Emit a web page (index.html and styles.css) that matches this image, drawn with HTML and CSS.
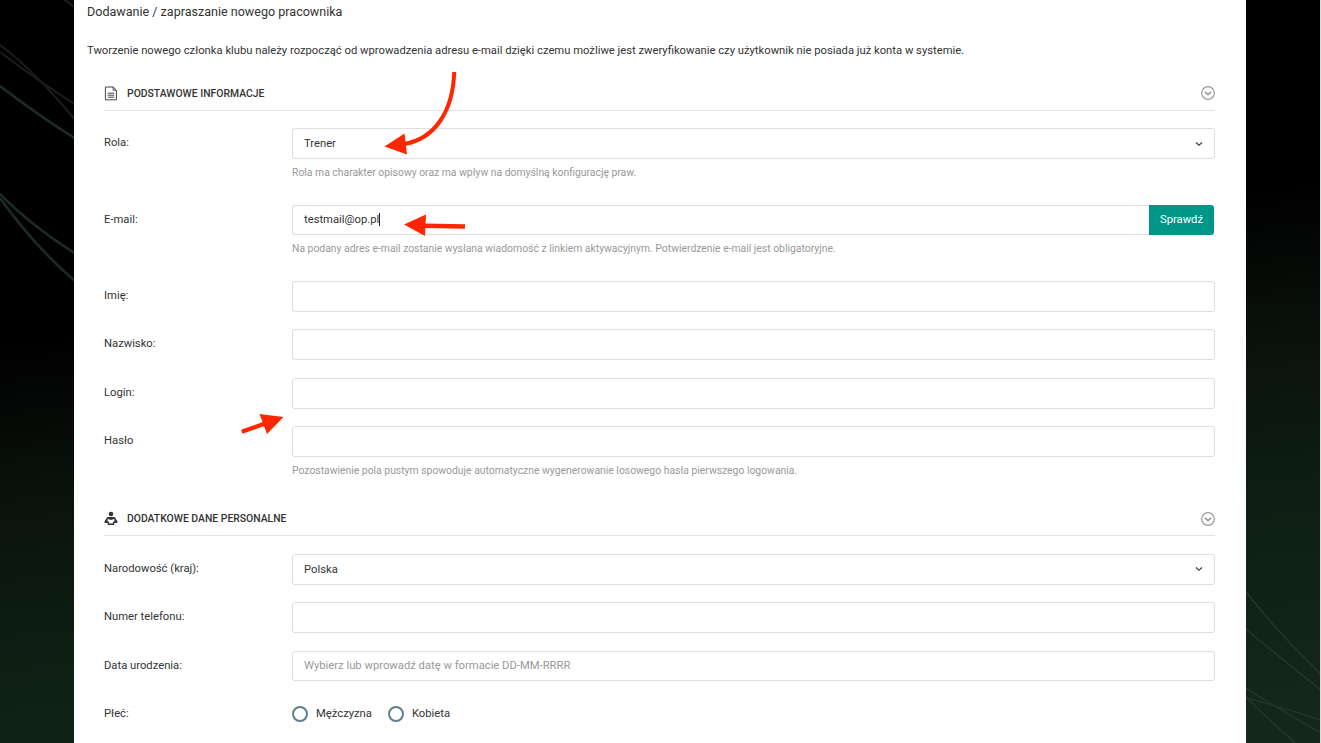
FILE: index.html
```html
<!DOCTYPE html>
<html lang="pl">
<head>
    <meta charset="UTF-8">
    <meta name="viewport" content="width=device-width, initial-scale=1.0">
    <title>Dodawanie nowego pracownika</title>
    <link rel="stylesheet" href="styles.css">
</head>
<body>
    <svg class="backdrop" viewBox="0 0 1320 743" fill="none">
        <g stroke="#1b1d1d" stroke-width="2">
            <path d="M62 -2L76 8"/>
            <path d="M0 45Q34 70 76 121"/>
            <path d="M0 52Q34 78 76 105"/>
        </g>
        <g stroke="#1c2c24" stroke-width="2.6">
            <path d="M0 86Q38 115 76 139"/>
            <path d="M0 194Q30 225 76 254"/>
            <path d="M0 198Q35 247 76 282"/>
        </g>
        <g stroke="#20382a" stroke-width="1.5">
            <path d="M1246 592Q1280 635 1321 674"/>
            <path d="M1246 629Q1285 662 1321 690"/>
            <path d="M1246 688Q1280 710 1321 733"/>
            <path d="M1246 698Q1285 708 1321 720"/>
            <path d="M1246 697Q1272 723 1296 743"/>
        </g>
    </svg>

    <main class="panel">
        <h1 class="title">Dodawanie / zapraszanie nowego pracownika</h1>
        <p class="intro">Tworzenie nowego członka klubu należy rozpocząć od wprowadzenia adresu e-mail dzięki czemu możliwe jest zweryfikowanie czy użytkownik nie posiada już konta w systemie.</p>

        <form class="form">
            <section class="section">
                <div class="section-header">
                    <svg class="section-icon" viewBox="0 0 14 15" fill="none" stroke="#444" stroke-width="1">
                        <path d="M1.4 1h7.8l3.2 3.2v9.6h-11zM9.2 1v3.2h3.2"/>
                        <path d="M3.7 7.2h6.6M3.7 9.2h6.6M3.7 11.2h6.6"/>
                    </svg>
                    <h2>Podstawowe informacje</h2>
                    <svg class="collapse" viewBox="0 0 14 14" fill="none" stroke="#999">
                        <circle cx="7" cy="7" r="6.3" stroke-width="1.2"/>
                        <path d="M3.9 5.8l3.1 2.8 3.1-2.8" stroke-width="1.7"/>
                    </svg>
                </div>
                <div class="row">
                    <label>Rola:</label>
                    <div class="field">
                        <div class="control select">Trener
                            <svg class="caret" viewBox="0 0 8 6" fill="none" stroke="#444" stroke-width="1.3"><path d="M1 1.4l3 2.8 3-2.8"/></svg>
                        </div>
                        <div class="help">Rola ma charakter opisowy oraz ma wpływ na domyślną konfigurację praw.</div>
                    </div>
                </div>
                <div class="row">
                    <label>E-mail:</label>
                    <div class="field">
                        <div class="input-group">
                            <div class="control email">testmail@op.pl<span class="cursor"></span></div>
                            <button class="button" type="button">Sprawdź</button>
                        </div>
                        <div class="help">Na podany adres e-mail zostanie wysłana wiadomość z linkiem aktywacyjnym. Potwierdzenie e-mail jest obligatoryjne.</div>
                    </div>
                </div>
                <div class="row">
                    <label for="name">Imię:</label>
                    <input class="control" id="name" type="text">
                </div>
                <div class="row">
                    <label for="surname">Nazwisko:</label>
                    <input class="control" id="surname" type="text">
                </div>
                <div class="row">
                    <label for="login">Login:</label>
                    <input class="control" id="login" type="text">
                </div>
                <div class="row">
                    <label for="password">Hasło</label>
                    <div class="field">
                        <input class="control" id="password" type="password">
                        <div class="help">Pozostawienie pola pustym spowoduje automatyczne wygenerowanie losowego hasła pierwszego logowania.</div>
                    </div>
                </div>
            </section>

            <section class="section">
                <div class="section-header">
                    <svg class="section-icon" viewBox="0 0 14 15" fill="#333">
                        <circle cx="7" cy="3" r="2.3"/>
                        <path d="M3.6 6h6.8c1.3 1.2 2.2 3 3.3 5.1l-.8 1h-2.6V14H3.7v-1.9H1.1l-.8-1C1.4 9 2.3 7.2 3.6 6z"/>
                        <path fill="#fff" d="M3.6 8l2 .5L7 9l1.4-.5 2-.5v2.4l-1.5.4v1.6H5.1v-1.6l-1.5-.4z"/>
                    </svg>
                    <h2>Dodatkowe dane personalne</h2>
                    <svg class="collapse" viewBox="0 0 14 14" fill="none" stroke="#999">
                        <circle cx="7" cy="7" r="6.3" stroke-width="1.2"/>
                        <path d="M3.9 5.8l3.1 2.8 3.1-2.8" stroke-width="1.7"/>
                    </svg>
                </div>
                <div class="row">
                    <label>Narodowość (kraj):</label>
                    <div class="control select">Polska
                        <svg class="caret" viewBox="0 0 8 6" fill="none" stroke="#444" stroke-width="1.3"><path d="M1 1.4l3 2.8 3-2.8"/></svg>
                    </div>
                </div>
                <div class="row">
                    <label for="phone">Numer telefonu:</label>
                    <input class="control" id="phone" type="text">
                </div>
                <div class="row">
                    <label for="birth">Data urodzenia:</label>
                    <input class="control" id="birth" type="text" placeholder="Wybierz lub wprowadź datę w formacie DD-MM-RRRR">
                </div>
                <div class="row">
                    <label>Płeć:</label>
                    <div class="radios">
                        <label class="radio"><input type="radio" name="gender">Mężczyzna</label>
                        <label class="radio"><input type="radio" name="gender">Kobieta</label>
                    </div>
                </div>
            </section>
        </form>
    </main>

    <!-- Red pointers over the form -->
    <svg class="arrows" viewBox="0 0 1320 743" fill="#ff2600">
        <path d="M454.2 72C453 111 435 139 404 144" fill="none" stroke="#ff2600" stroke-width="4"/>
        <path d="M384.5 146.5L404.5 133.5L407 154.5z"/>
        <path d="M465 226.5L424 225.8" stroke="#ff2600" stroke-width="4.6"/>
        <path d="M404 224.5L426 214.5L425 236z"/>
        <path d="M241.8 431.8L265 423.5" stroke="#ff2600" stroke-width="4.2"/>
        <path d="M283.5 417L259.5 414L267 434z"/>
    </svg>
</body>
</html>
```

FILE: styles.css
```css
* {
    box-sizing: border-box;
}
body {
    margin: 0;
    height: 743px;
    overflow: hidden;
    font-family: Roboto, sans-serif;
    font-size: 11.24px;
    color: #333;
    background: linear-gradient(173deg, #000 0%, #000 38%, #0a110b 54%, #0d1d13 70%, #112317 84%, #14291b 100%);
    border-right: 1px solid #ddd;
}
.backdrop,
.arrows {
    position: absolute;
    top: 0;
    left: 0;
    width: 1320px;
    height: 743px;
    pointer-events: none;
}
.panel {
    position: relative;
    width: 1172px;
    height: 743px;
    margin-left: 74px;
    padding: 3px 31px 0 13px;
    background: #fff;
}
.title {
    margin: 0;
    font-size: 12.56px;
    font-weight: 400;
    line-height: 18px;
}
.intro {
    margin: 21px 0 0;
    line-height: 18px;
    white-space: nowrap;
}
.form {
    padding: 17px 0 0 17px;
}
.section-header {
    display: flex;
    align-items: center;
    height: 33.6px;
    margin-bottom: 17.6px;
    border-bottom: 1px solid #e2e2e2;
}
.section-icon {
    width: 14px;
    height: 15px;
    margin-right: 9px;
}
.section-header h2 {
    margin: 0;
    font-size: 10.4px;
    font-weight: 500;
    text-transform: uppercase;
}
.collapse {
    width: 14px;
    height: 14px;
    margin-left: auto;
}
.row {
    display: grid;
    grid-template-columns: 188px 1fr;
    margin-bottom: 17.6px;
    line-height: 30.8px;
}
.control {
    display: block;
    width: 100%;
    height: 30.8px;
    padding: 0 11px;
    border: 1px solid #ddd;
    border-radius: 3px;
    background: #fff;
    color: #333;
    font: inherit;
    line-height: 29px;
    outline: none;
}
.control::placeholder {
    color: #999;
    opacity: 1;
}
.select {
    display: flex;
    align-items: center;
    justify-content: space-between;
}
.caret {
    width: 8px;
    height: 6px;
}
.input-group,
.email {
    display: flex;
    align-items: center;
}
.email {
    flex: 1;
    border-right: 0;
    border-radius: 3px 0 0 3px;
}
.cursor {
    width: 1px;
    height: 13px;
    background: #222;
}
.button {
    width: 65px;
    height: 30.8px;
    margin-right: 1px;
    padding: 0;
    border: 0;
    border-radius: 0 3px 3px 0;
    background: #009688;
    color: #fff;
    font: inherit;
}
.help {
    height: 28px;
    padding-top: 5px;
    color: #999;
    font-size: 10.39px;
    line-height: 18px;
}
.radios {
    display: flex;
    gap: 16px;
}
.radio {
    display: flex;
    align-items: center;
}
.radio input {
    appearance: none;
    width: 16px;
    height: 16px;
    margin: 0 8px 0 0;
    border: 2px solid #607d8b;
    border-radius: 50%;
}
```
